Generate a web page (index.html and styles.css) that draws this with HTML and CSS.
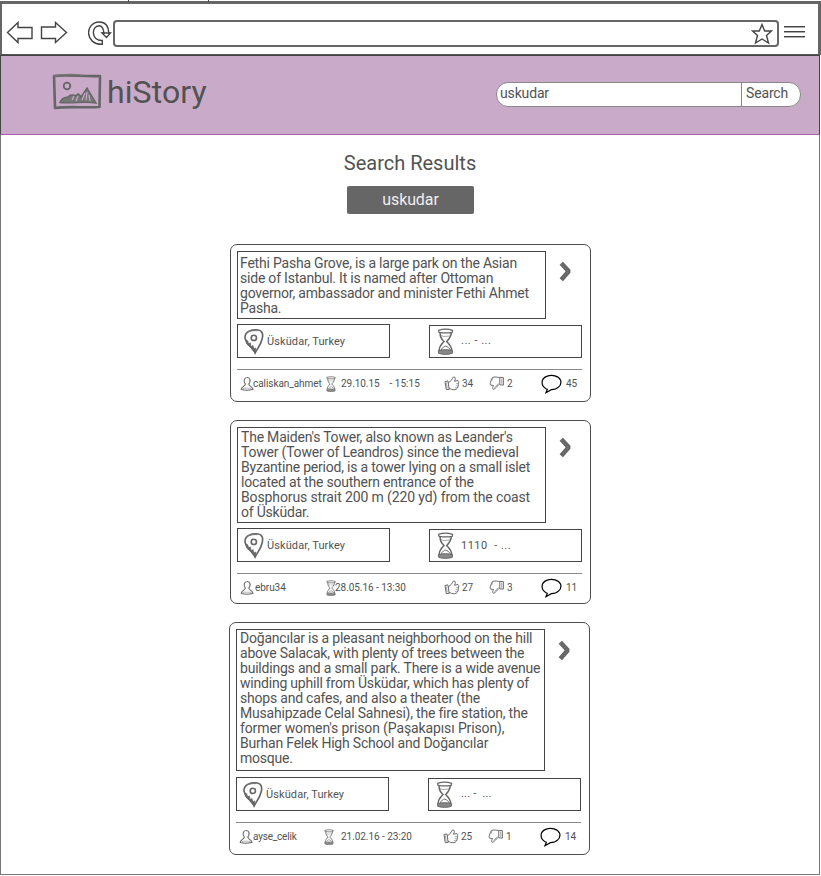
FILE: index.html
```html
<!DOCTYPE html>
<html lang="en">
<head>
<meta charset="utf-8">
<title>hiStory</title>
<link rel="stylesheet" href="styles.css">
</head>
<body>
<svg class="sprite" aria-hidden="true">
  <symbol id="pin" viewBox="57 277 61 80">
    <path d="M91 352C84 335 60 324 60 304C60 286 80 280 100 282C114 284 116 296 112 310C108 328 98 338 91 352Z" fill="none" stroke="#666" stroke-width="5"/>
    <path d="M63 292C70 284 84 283 97 284" fill="none" stroke="#777" stroke-width="3"/>
    <path d="M61 308L66 317L68 314L71 326L76 321L79 334L84 329L87 340L93 337L91 353L80 338L66 325Z" fill="#666" stroke="#666" stroke-width="2.5"/>
    <circle cx="87" cy="306" r="8" fill="none" stroke="#666" stroke-width="5"/>
  </symbol>
  <symbol id="hourglass" viewBox="82 277 51 82">
    <path d="M86 284C98 280 118 280 129 284M88 290C100 292 118 292 128 290M86 283L88 291M129 283L128 291" fill="none" stroke="#666" stroke-width="4"/>
    <path d="M91 292C91 306 97 313 103 318C96 325 88 334 88 346M125 292C124 306 116 313 111 318C119 326 126 334 127 346" fill="none" stroke="#666" stroke-width="4.500"/>
    <path d="M94 300C104 306 112 300 122 302" fill="none" stroke="#777" stroke-width="2"/>
    <path d="M94 344C98 336 104 332 108 332C114 334 120 338 123 345" fill="none" stroke="#666" stroke-width="3"/>
    <path d="M86 346C98 342 118 342 129 346L128 354C118 358 98 358 87 354Z" fill="#888" stroke="#666" stroke-width="3"/>
  </symbol>
  <symbol id="user" viewBox="45 423 44 46">
    <path d="M62 448C55 440 58 427 67 427C78 426 79 440 73 448C72 454 84 456 86 464C76 467 58 467 49 465C47 458 60 455 62 448Z" fill="none" stroke="#666" stroke-width="3.2"/>
    <path d="M75 433C77 440 74 445 70 449M53 462C62 459 74 462 82 461" fill="none" stroke="#888" stroke-width="2"/>
  </symbol>
  <symbol id="like" viewBox="100 425 49 46">
    <path d="M103 442L112 440L116 466L107 467ZM112 448C120 442 125 435 129 428C136 427 136 434 132 441L143 439C147 442 144 449 144 452C144 460 140 466 133 467C126 468 120 465 115 462" fill="none" stroke="#666" stroke-width="3"/>
    <path d="M107 445L110 463M137 448L144 449M136 454L142 456M134 460L140 462" fill="none" stroke="#777" stroke-width="2"/>
  </symbol>
  <symbol id="dislike" viewBox="235 425 49 46">
    <path d="M247 429C255 427 262 429 268 430L268 451C262 452 258 459 252 465C246 468 244 462 249 454L240 453C237 450 239 445 241 440C242 435 244 431 247 429ZM268 429L279 430L279 453L269 452" fill="none" stroke="#666" stroke-width="3"/>
    <path d="M274 433L274 449M247 429L244 440M252 460C258 456 260 450 264 448" fill="none" stroke="#777" stroke-width="2"/>
  </symbol>
  <symbol id="comment" viewBox="391 418 63 60">
    <path d="M406 462C390 453 390 432 408 425C424 419 444 423 450 437C454 452 440 465 422 465L406 474L410 464Z" fill="#fff" stroke="#000" stroke-width="3.6"/>
    <path d="M402 451L424 429M411 459L438 432M427 459L444 442" stroke="#eee" stroke-width="2"/>
  </symbol>
  <symbol id="chevron" viewBox="445 79 40 63">
    <path d="M452 85L475 110L452 136" fill="none" stroke="#666" stroke-width="14" stroke-linejoin="bevel"/>
    <path d="M452 88L475 111L453 132" fill="none" stroke="#999" stroke-width="2" stroke-dasharray="3 6"/>
  </symbol>
</svg>

<div class="tabs"><i class="tick tick-a"></i><i class="tick tick-b"></i></div>
<div class="window">
  <div class="toolbar">
    <svg class="back" viewBox="0 0 28 24"><path d="M1.5 11.5L12 1.5V6.500H26V17.500H12V21.500Z"/></svg>
    <svg class="forward" viewBox="0 0 28 24"><path d="M26.500 11.500L15.500 1.500V6H1.500V17.500H15.500V21.500Z"/></svg>
    <svg class="reload" viewBox="0 0 24 25"><path d="M14.300 23.300C-3.500 24-3.500 1 11.500 1C18 1 20.500 6 20.700 12H22.500L18.500 16.500L14 12H16C15.500 8 14.500 4.700 11.300 4.700C3 5 3 20 14.300 19.500Z"/><path d="M14 12H22"/></svg>
    <div class="address">
      <svg viewBox="0 0 22 22"><path d="M11 1.500L13.700 8H20.500L15.500 12.500L17.500 20L11 16L4.500 20L6.500 12.500L1.500 8H8.300Z"/></svg>
    </div>
    <div class="burger"><i></i><i></i><i></i></div>
  </div>

  <header class="header">
    <svg class="logo" viewBox="0 0 50 38">
      <path d="M2 3C15 1 32 4 48 3L47.500 34C32 35 18 33 3 35L2 3Z" fill="none" stroke="#666" stroke-width="2.600" stroke-linejoin="round"/>
      <path d="M1.500 3C12 1 25 1 30 2.500" fill="none" stroke="#777" stroke-width="1.500"/>
      <circle cx="15" cy="13" r="3.300" fill="none" stroke="#666" stroke-width="1.800"/>
      <path d="M8 29.500C9 26 13 24 16 24C18 21 23 22 24 23C26 19 28 22 29 24L35 15L44 30C32 28 20 31 8 29.500Z" fill="#777" stroke="#666" stroke-width="1.400"/>
      <path d="M20 27L22 23M24 28L26 23M30 27L33 20M34 27L35 19M38 28L37 22" stroke="#c9aac9" stroke-width="1.200"/>
    </svg>
    <h1 class="brand">hiStory</h1>
    <div class="search"><span class="query">uskudar</span><span class="go">Search</span></div>
  </header>

  <main class="main">
    <h2 class="title">Search Results</h2>
    <div class="tag">uskudar</div>

    <article class="card card-1">
      <div class="top">
        <p class="text">Fethi Pasha Grove, is a large park on the Asian<br>side of Istanbul. It is named after Ottoman<br>governor, ambassador and minister Fethi Ahmet<br>Pasha.</p>
        <svg class="chevron"><use href="#chevron"/></svg>
      </div>
      <div class="facts">
        <div class="fact"><svg class="pin"><use href="#pin"/></svg><span>Üsküdar, Turkey</span></div>
        <div class="fact when"><svg class="glass"><use href="#hourglass"/></svg><span class="period">... - ...</span></div>
      </div>
      <div class="meta">
        <div><svg class="user"><use href="#user"/></svg><span class="name">caliskan_ahmet</span></div>
        <div><svg class="glass-s"><use href="#hourglass"/></svg><span class="date">29.10.15</span><span class="hour">- 15:15</span></div>
        <div><svg class="thumb"><use href="#like"/></svg><span class="num">34</span></div>
        <div><svg class="thumb"><use href="#dislike"/></svg><span class="num">2</span></div>
        <div><svg class="comment"><use href="#comment"/></svg><span class="num">45</span></div>
      </div>
    </article>

    <article class="card card-2">
      <div class="top">
        <p class="text">The Maiden's Tower, also known as Leander's<br>Tower (Tower of Leandros) since the medieval<br>Byzantine period, is a tower lying on a small islet<br>located at the southern entrance of the<br><span class="loose">Bosphorus strait 200 m (220 yd) from the coast</span><br>of Üsküdar.</p>
        <svg class="chevron"><use href="#chevron"/></svg>
      </div>
      <div class="facts">
        <div class="fact"><svg class="pin"><use href="#pin"/></svg><span>Üsküdar, Turkey</span></div>
        <div class="fact when"><svg class="glass"><use href="#hourglass"/></svg><span class="period">1110&nbsp; - ...</span></div>
      </div>
      <div class="meta">
        <div><svg class="user"><use href="#user"/></svg><span class="name">ebru34</span></div>
        <div><svg class="glass-s"><use href="#hourglass"/></svg><span class="date">28.05.16 - 13:30</span></div>
        <div><svg class="thumb"><use href="#like"/></svg><span class="num">27</span></div>
        <div><svg class="thumb"><use href="#dislike"/></svg><span class="num">3</span></div>
        <div><svg class="comment"><use href="#comment"/></svg><span class="num">11</span></div>
      </div>
    </article>

    <article class="card card-3">
      <div class="top">
        <p class="text">Doğancılar is a pleasant neighborhood on the hill<br>above Salacak, with plenty of trees between the<br>buildings and a small park. There is a wide avenue<br>winding uphill from Üsküdar, which has plenty of<br>shops and cafes, and also a theater (the<br>Musahipzade Celal Sahnesi), the fire station, the<br><span class="loose">former women's prison (Paşakapısı Prison),</span><br>Burhan Felek High School and Doğancılar<br>mosque.</p>
        <svg class="chevron"><use href="#chevron"/></svg>
      </div>
      <div class="facts">
        <div class="fact"><svg class="pin"><use href="#pin"/></svg><span>Üsküdar, Turkey</span></div>
        <div class="fact when"><svg class="glass"><use href="#hourglass"/></svg><span class="period">... - &nbsp;...</span></div>
      </div>
      <div class="meta">
        <div><svg class="user"><use href="#user"/></svg><span class="name">ayse_celik</span></div>
        <div><svg class="glass-s"><use href="#hourglass"/></svg><span class="date">21.02.16 - 23:20</span></div>
        <div><svg class="thumb"><use href="#like"/></svg><span class="num">25</span></div>
        <div><svg class="thumb"><use href="#dislike"/></svg><span class="num">1</span></div>
        <div><svg class="comment"><use href="#comment"/></svg><span class="num">14</span></div>
      </div>
    </article>
  </main>
</div>
</body>
</html>
```
FILE: styles.css
```css
* { box-sizing: border-box; }
body {
  margin: 0;
  width: 821px;
  height: 876px;
  overflow: hidden;
  background: #fff;
  color: #525252;
  font-family: Roboto, "Liberation Sans", sans-serif;
}
h1, h2, p { margin: 0; font-weight: 400; }
.sprite { display: none; }
svg { display: block; flex: none; }

.tabs { display: flex; height: 4px; border-bottom: 3px solid #666; }
.tick { width: 1px; height: 2px; background: #444; }
.tick-a { margin-left: 128px; }
.tick-b { margin-left: 79px; }

.window { height: 871px; }
.toolbar {
  display: flex;
  align-items: flex-start;
  height: 51px;
  border-left: 2px solid #666;
  border-right: 3px solid #666;
  border-bottom: 1px solid #555;
}
.toolbar svg { fill: #fff; stroke: #444; stroke-width: 1.4; }
.back { width: 28px; height: 24px; margin: 17px 0 0 4px; }
.forward { width: 28px; height: 24px; margin: 17px 0 0 6px; }
.reload { width: 24px; height: 25px; margin: 17px 0 0 20px; }
.address {
  display: flex;
  flex: none;
  justify-content: flex-end;
  width: 666px;
  height: 27px;
  margin: 16px 0 0 1px;
  padding: 1px 4px 0 0;
  border: 2px solid #666;
  border-radius: 4px;
}
.address svg { width: 22px; height: 22px; }
.burger { width: 21px; margin: 22px 0 0 5px; }
.burger i { display: block; height: 2px; margin-bottom: 3px; border-top: 1px solid #444; border-bottom: 1px solid #aaa; }

.header {
  display: flex;
  align-items: flex-start;
  width: 820px;
  height: 80px;
  padding-left: 51px;
  background: #c9aac9;
  border: 1px solid #444;
  border-bottom-color: #a65fa6;
}
.logo { width: 50px; height: 38px; margin-top: 17px; }
.brand { width: 389px; margin: 17px 0 0 5px; font-size: 32px; line-height: 38px; letter-spacing: 0.1px; }
.search {
  display: flex;
  width: 305px;
  height: 25px;
  margin-top: 26px;
  background: #fff;
  border: 1px solid #888;
  border-radius: 12px;
  font-size: 14px;
  line-height: 20px;
  letter-spacing: -0.15px;
}
.query { width: 245px; padding-left: 3px; border-right: 1px solid #888; }
.go { padding-left: 4px; }

.main {
  width: 820px;
  height: 740px;
  padding-top: 16px;
  border: 1px solid #777;
  border-top: 0;
}
.title { font-size: 20px; line-height: 24px; text-align: center; }
.tag {
  width: 127px;
  height: 28px;
  margin: 11px auto 30px 346px;
  border-radius: 2px;
  background: #666;
  color: #eee;
  font-size: 16px;
  line-height: 27px;
  text-align: center;
  letter-spacing: -0.1px;
}

.card {
  width: 361px;
  margin-left: 229px;
  padding: 6px;
  border: 1px solid #4d4d4d;
  border-radius: 7px;
}
.card-1 { height: 158px; margin-bottom: 18px; }
.card-2 { height: 184px; margin-bottom: 18px; }
.card-3 { height: 233px; margin-left: 228px; }
.top { display: flex; align-items: flex-start; }
.text {
  width: 309px;
  height: 68px;
  padding: 4px 0 0 2px;
  border: 1px solid #444;
  font-size: 14px;
  line-height: 15px;
  letter-spacing: -0.21px;
  white-space: nowrap;
}
.loose { letter-spacing: -0.12px; }
.card-2 .text { height: 96px; padding: 2px 0 0 3px; }
.card-3 .text { height: 142px; padding: 1px 0 0 3px; }
.chevron { width: 13px; height: 21px; margin: 10px 0 0 13px; }
.card-3 .chevron { margin-top: 11px; }

.facts { display: flex; gap: 39px; margin-top: 5px; }
.card-3 .facts { margin-top: 6px; }
.fact {
  display: flex;
  align-items: center;
  width: 153px;
  height: 34px;
  padding-left: 6px;
  border: 1px solid #444;
  font-size: 11px;
  letter-spacing: 0.1px;
}
.when { margin-top: 1px; height: 33px; padding-left: 7px; }
.pin { width: 20px; height: 27px; margin-right: 3px; }
.glass { width: 17px; height: 27px; margin-right: 7px; }
.period { margin-bottom: 2px; letter-spacing: 0.5px; }
.card-2 .period { margin-bottom: 0; }
.card-3 .period { letter-spacing: 0.2px; margin-left: 1px; }

.meta {
  display: grid;
  grid-template-columns: 86px 118px 45px 52px 40px;
  width: 345px;
  height: 28px;
  margin-top: 11px;
  padding-left: 3px;
  border-top: 1px solid #888;
  font-size: 10px;
}
.meta div { display: flex; align-items: center; white-space: nowrap; }
.user { width: 14px; height: 15px; margin-right: -1px; }
.name { letter-spacing: -0.06px; }
.card-2 .name { margin-left: 2px; }
.card-3 .name { margin-left: 1px; letter-spacing: -0.2px; }
.glass-s { width: 10px; height: 16px; }
.date { margin-left: 5px; letter-spacing: -0.05px; }
.card-2 .date { margin-left: -1px; }
.card-3 .glass-s { margin-left: -1px; }
.card-3 .date { margin-left: 7px; }
.hour { margin-left: 10px; }
.thumb { width: 16px; height: 15px; }
.num { margin-left: 2px; }
.comment { width: 21px; height: 20px; margin-right: 2px; }
```
